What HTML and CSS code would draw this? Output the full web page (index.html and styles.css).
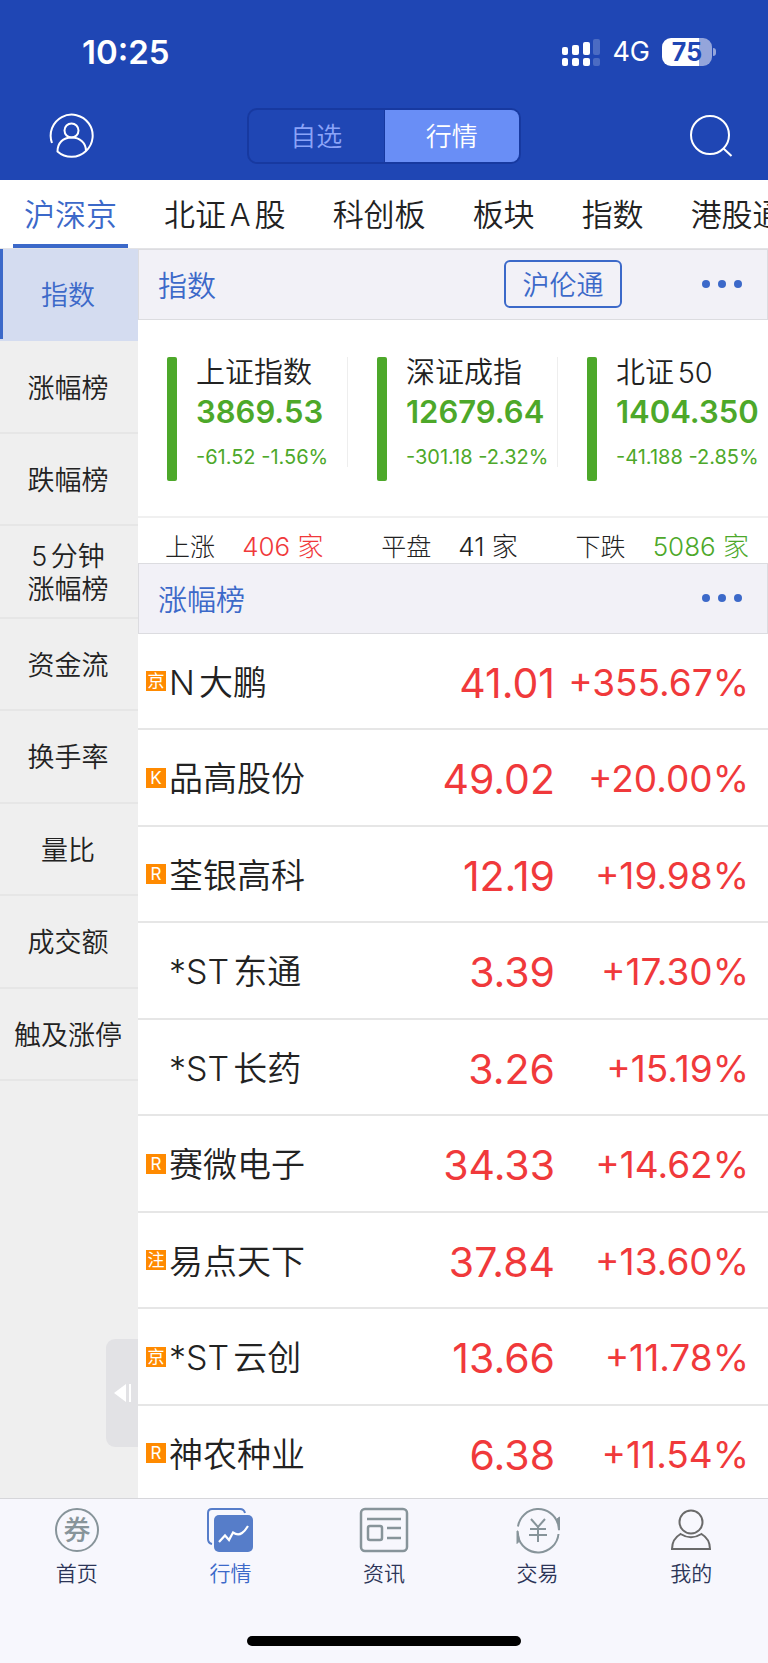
FILE: index.html
```html
<!DOCTYPE html>
<html lang="zh-CN">
<head>
    <meta charset="UTF-8">
    <meta name="viewport" content="width=device-width, initial-scale=1.0">
    <title>行情</title>
    <link rel="stylesheet" href="styles.css">
</head>
<body>
    <header class="top">
        <div class="status">
            <span class="time">10:25</span>
            <div class="status-right">
                <svg class="signal" width="38" height="28" viewBox="0 0 38 28" fill="#fff">
                    <rect x="0" y="9" width="6" height="8" rx="2"/>
                    <rect x="10" y="7" width="7" height="10" rx="2"/>
                    <rect x="21" y="4" width="7" height="13" rx="2"/>
                    <rect x="31" y="1" width="7" height="16" rx="2" opacity=".2"/>
                    <rect x="0" y="20" width="6" height="8" rx="2"/>
                    <rect x="10" y="20" width="7" height="8" rx="2"/>
                    <rect x="21" y="20" width="7" height="8" rx="2"/>
                    <rect x="31" y="20" width="7" height="8" rx="2" opacity=".2"/>
                </svg>
                <span class="network">4G</span>
                <span class="battery">75</span>
            </div>
        </div>
        <div class="toolbar">
            <button class="icon-btn" aria-label="账户">
                <svg width="46" height="46" viewBox="0 0 46 46" fill="none" stroke="#fff" stroke-width="2">
                    <path d="M3 30A21 21 0 1 1 37 38A21 21 0 0 1 8.500 38.500C8.500 30 14 24.500 22.500 24.500S37 30 37 38"/>
                    <circle cx="22.500" cy="17.500" r="7"/>
                </svg>
            </button>
            <div class="segment">
                <button>自选</button>
                <button class="active">行情</button>
            </div>
            <button class="icon-btn" aria-label="搜索">
                <svg width="46" height="46" viewBox="0 0 46 46" fill="none" stroke="#fff" stroke-width="2">
                    <circle cx="22" cy="22" r="19"/>
                    <path d="M35.500 35.500L43.500 43"/>
                </svg>
            </button>
        </div>
    </header>

    <nav class="tabs">
        <a href="#" class="active">沪深京</a>
        <a href="#">北证A股</a>
        <a href="#">科创板</a>
        <a href="#">板块</a>
        <a href="#">指数</a>
        <a href="#">港股通</a>
    </nav>

    <main>
        <aside class="side">
            <nav class="side-list">
                <a href="#" class="active">指数</a>
                <a href="#">涨幅榜</a>
                <a href="#">跌幅榜</a>
                <a href="#">5分钟<br>涨幅榜</a>
                <a href="#">资金流</a>
                <a href="#">换手率</a>
                <a href="#">量比</a>
                <a href="#">成交额</a>
                <a href="#">触及涨停</a>
            </nav>
            <button class="handle" aria-label="收起">
                <svg width="18" height="20" viewBox="0 0 18 20" fill="#fff">
                    <path d="M0 10L12 1V19Z"/>
                    <rect x="15" y="1" width="2" height="18"/>
                </svg>
            </button>
        </aside>

        <div class="content">
            <section>
                <div class="panel-head">
                    <h2>指数</h2>
                    <button class="link-btn">沪伦通</button>
                    <button class="more" aria-label="更多"><i></i><i></i><i></i></button>
                </div>
                <div class="cards">
                    <div class="card">
                        <div class="card-body">
                            <h3>上证指数</h3>
                            <p class="value">3869.53</p>
                            <p class="change">-61.52 -1.56%</p>
                        </div>
                    </div>
                    <div class="card">
                        <div class="card-body">
                            <h3>深证成指</h3>
                            <p class="value">12679.64</p>
                            <p class="change">-301.18 -2.32%</p>
                        </div>
                    </div>
                    <div class="card">
                        <div class="card-body">
                            <h3>北证50</h3>
                            <p class="value">1404.350</p>
                            <p class="change">-41.188 -2.85%</p>
                        </div>
                    </div>
                </div>
                <div class="counts">
                    <div>上涨<span class="up">406 家</span></div>
                    <div>平盘<span>41 家</span></div>
                    <div>下跌<span class="down">5086 家</span></div>
                </div>
            </section>

            <section>
                <div class="panel-head">
                    <h2>涨幅榜</h2>
                    <button class="more" aria-label="更多"><i></i><i></i><i></i></button>
                </div>
                <table class="stocks">
                    <tbody>
                        <tr><td class="tag"><b>京</b></td><td class="name">N大鹏</td><td class="price">41.01</td><td class="pct">+355.67%</td></tr>
                        <tr><td class="tag"><b>K</b></td><td class="name">品高股份</td><td class="price">49.02</td><td class="pct">+20.00%</td></tr>
                        <tr><td class="tag"><b>R</b></td><td class="name">荃银高科</td><td class="price">12.19</td><td class="pct">+19.98%</td></tr>
                        <tr><td class="tag"></td><td class="name">*ST东通</td><td class="price">3.39</td><td class="pct">+17.30%</td></tr>
                        <tr><td class="tag"></td><td class="name">*ST长药</td><td class="price">3.26</td><td class="pct">+15.19%</td></tr>
                        <tr><td class="tag"><b>R</b></td><td class="name">赛微电子</td><td class="price">34.33</td><td class="pct">+14.62%</td></tr>
                        <tr><td class="tag"><b>注</b></td><td class="name">易点天下</td><td class="price">37.84</td><td class="pct">+13.60%</td></tr>
                        <tr><td class="tag"><b>京</b></td><td class="name">*ST云创</td><td class="price">13.66</td><td class="pct">+11.78%</td></tr>
                        <tr><td class="tag"><b>R</b></td><td class="name">神农种业</td><td class="price">6.38</td><td class="pct">+11.54%</td></tr>
                    </tbody>
                </table>
            </section>
        </div>
    </main>

    <footer>
        <nav class="bottom">
            <a href="#">
                <svg width="48" height="48" viewBox="0 0 48 48" fill="none" stroke="#87949a" stroke-width="2">
                    <circle cx="24" cy="24" r="21"/>
                    <text class="coupon" x="24" y="34" text-anchor="middle">券</text>
                </svg>
                首页
            </a>
            <a href="#" class="active">
                <svg width="48" height="48" viewBox="0 0 48 48" fill="none" stroke="#567dc9" stroke-width="2">
                    <path d="M6 38Q2 37 2 33V7Q2 3 6 3H34Q38 3 39 7"/>
                    <rect x="8" y="9" width="39" height="37" rx="5" fill="#567dc9" stroke="none"/>
                    <path d="M13 36L19 29.500L23 34L27 26.500Q32 30 36 27Q39 25 42 20" stroke="#fff" stroke-width="2.200"/>
                </svg>
                行情
            </a>
            <a href="#">
                <svg width="50" height="48" viewBox="0 0 50 48" fill="none" stroke="#87949a" stroke-width="2.500">
                    <rect x="2" y="3" width="46" height="42" rx="4"/>
                    <path d="M8 13H42M28 22H42M28 32H42"/>
                    <rect x="9" y="20" width="14" height="14" rx="2"/>
                </svg>
                资讯
            </a>
            <a href="#">
                <svg width="48" height="48" viewBox="0 0 48 48" fill="none" stroke="#87949a" stroke-width="2">
                    <path d="M4 20.500A20.500 20.500 0 0 1 44 18M44.500 28A20.500 20.500 0 0 1 4 30"/>
                    <path d="M43 13L45.500 11V24H44.500Z M5.500 35L3 37.500V25H4Z" fill="#87949a" stroke-width="1"/>
                    <path d="M17 13L24 21L31 13M16 23H32M15 29H33M24 21V36"/>
                </svg>
                交易
            </a>
            <a href="#">
                <svg width="48" height="48" viewBox="0 0 48 48" fill="none" stroke="#6a6a6a" stroke-width="2">
                    <circle cx="24" cy="16" r="11.500"/>
                    <path d="M13.500 28Q5 33 5 43H43Q43 33 34.500 28Q24 34.500 13.500 28Z"/>
                </svg>
                我的
            </a>
        </nav>
        <div class="home-bar"></div>
    </footer>
</body>
</html>
```

FILE: styles.css
```css
* {
    box-sizing: border-box;
}
body {
    margin: 0;
    height: 100vh;
    display: flex;
    flex-direction: column;
    font-family: Inter, "Noto Sans CJK SC", sans-serif;
    font-weight: 350;
    color: #222;
    background-color: #fff;
    text-autospace: normal;
    overflow: hidden;
}
h2, h3, p {
    margin: 0;
    font-weight: inherit;
}
a {
    color: inherit;
    text-decoration: none;
}
button {
    font: inherit;
    color: inherit;
    background: none;
    border: none;
    padding: 0;
    cursor: pointer;
}
svg {
    display: block;
}

/* header */
.top {
    background-color: #1f46b4;
    color: #fff;
    height: 180px;
    flex-shrink: 0;
}
.status {
    display: flex;
    justify-content: space-between;
    align-items: center;
    height: 103px;
    padding: 0 56px 0 82px;
}
.time {
    font-size: 33px;
    font-weight: 600;
}
.status-right {
    display: flex;
    align-items: center;
}
.network {
    font-size: 27px;
    font-weight: 400;
    margin: 0 12px;
}
.battery {
    position: relative;
    width: 50px;
    height: 28px;
    line-height: 28px;
    border-radius: 9px;
    background: linear-gradient(to right, #fff 75%, #94a5db 75%);
    color: #1f46b4;
    font-size: 25px;
    font-weight: 700;
    text-align: center;
}
.battery::after {
    content: "";
    position: absolute;
    left: 51px;
    top: 10px;
    width: 3px;
    height: 8px;
    border-radius: 0 3px 3px 0;
    background-color: #94a5db;
}
.toolbar {
    display: grid;
    grid-template-columns: 1fr auto 1fr;
    align-items: center;
    height: 66px;
    padding: 0 34px 0 34px;
}
.icon-btn:first-child {
    justify-self: start;
    margin-left: 15px;
}
.icon-btn:last-child {
    justify-self: end;
}
.segment {
    display: flex;
    width: 274px;
    height: 56px;
    border: 2px solid #1739a0;
    border-radius: 10px;
    overflow: hidden;
}
.segment button {
    flex: 1;
    padding-bottom: 3px;
    font-size: 26px;
    color: #8ba3f8;
}
.segment .active {
    background-color: #698ef6;
    color: #fff;
    border-left: 1px solid #1739a0;
}

/* tabs */
.tabs {
    display: flex;
    gap: 25px;
    flex-shrink: 0;
    height: 69px;
    padding-left: 13px;
    border-bottom: 1px solid #e3e3e6;
    overflow: hidden;
}
.tabs a {
    flex-shrink: 0;
    height: 68px;
    padding: 0 11px;
    font-size: 31px;
    line-height: 70px;
}
.tabs .active {
    color: #3c69c9;
    box-shadow: inset 0 -4px #3c69c9;
}

main {
    flex: 1;
    min-height: 0;
    display: flex;
    overflow: hidden;
}

/* left menu */
.side {
    position: relative;
    width: 138px;
    flex-shrink: 0;
    background-color: #efefef;
}
.side-list {
    display: flex;
    flex-direction: column;
    height: 832px;
}
.side-list a {
    flex: 1;
    display: flex;
    align-items: center;
    justify-content: center;
    text-align: center;
    padding: 3px 2px 0 0;
    font-size: 27px;
    line-height: 33px;
    border-bottom: 2px solid #e6e6e6;
}
.side-list .active {
    color: #3c69c9;
    background-color: #d4dcf0;
    border-bottom-color: #d4dcf0;
    box-shadow: inset 3px 0 #3c69c9;
}
.handle {
    position: absolute;
    right: 0;
    bottom: 51px;
    width: 32px;
    height: 108px;
    padding-left: 8px;
    border-radius: 9px 0 0 9px;
    background-color: #e2e2e5;
}

/* content */
.content {
    flex: 1;
    min-width: 0;
}
.panel-head {
    display: flex;
    align-items: center;
    height: 71px;
    padding: 0 25px 1px 19px;
    background-color: #f2f1f7;
    border: 1px solid #dcdce0;
    color: #3c69c9;
}
.panel-head h2 {
    flex: 1;
    font-size: 29px;
}
.link-btn {
    width: 118px;
    height: 48px;
    margin-right: 80px;
    padding-bottom: 2px;
    border: 2px solid #3c69c9;
    border-radius: 6px;
    font-size: 27px;
}
.more {
    display: flex;
    gap: 8px;
}
.more i {
    width: 8px;
    height: 8px;
    border-radius: 50%;
    background-color: #3c69c9;
}
.cards {
    display: grid;
    grid-template-columns: repeat(3, minmax(0, 1fr));
    height: 198px;
    padding-top: 37px;
    border-bottom: 2px solid #f0f0f0;
}
.card {
    display: flex;
    padding-left: 29px;
}
.card::before {
    content: "";
    width: 10px;
    height: 124px;
    border-radius: 2px;
    background-color: #4da82a;
}
.card-body {
    flex: 1;
    min-width: 0;
    height: 110px;
    padding-left: 19px;
    border-right: 1px solid #eee;
    white-space: nowrap;
}
.card:last-child .card-body {
    border-right: none;
}
.card h3 {
    font-size: 29px;
    line-height: 32px;
}
.value {
    font-size: 31px;
    line-height: 46px;
    font-weight: 600;
    color: #4da82a;
}
.change {
    font-size: 20px;
    font-weight: 400;
    line-height: 44px;
    color: #4da82a;
}
.counts {
    display: flex;
    justify-content: space-between;
    height: 45px;
    padding: 0 19px 0 27px;
    font-size: 25px;
    line-height: 58px;
    font-weight: 300;
    overflow: hidden;
}
.counts span {
    margin-left: 24px;
    font-size: 26px;
}
.up {
    color: #f0393b;
}
.down {
    color: #4da82a;
}

/* stock table */
.stocks {
    width: 100%;
    border-spacing: 0;
    table-layout: fixed;
}
.stocks td {
    height: 96px;
    padding: 0;
    border-bottom: 2px solid #e6e6e6;
}
.stocks tr:nth-child(even) td {
    height: 97px;
}
.stocks .tag {
    width: 31px;
    padding-left: 8px;
}
.tag b {
    display: block;
    width: 20px;
    height: 20px;
    background-color: #ff8a00;
    color: #fff;
    font-size: 17px;
    line-height: 20px;
    font-weight: 400;
    text-align: center;
}
.stocks .name {
    padding-bottom: 2px;
    font-size: 34px;
}
.price, .pct {
    text-align: right;
    font-weight: 400;
    color: #f0393b;
}
.stocks .price {
    width: 150px;
    padding-top: 3px;
    font-size: 41px;
}
.stocks .pct {
    width: 213px;
    padding: 2px 19px 0 0;
    font-size: 37px;
}

/* bottom bar */
footer {
    flex-shrink: 0;
    height: 165px;
    display: flex;
    flex-direction: column;
    justify-content: space-between;
    align-items: center;
    padding-bottom: 17px;
    background-color: #f7f7fd;
    border-top: 1px solid #d6d6da;
}
.bottom {
    display: flex;
    width: 100%;
    padding-top: 7px;
}
.bottom a {
    flex: 1;
    display: flex;
    flex-direction: column;
    align-items: center;
    gap: 5px;
    font-size: 21px;
    line-height: 30px;
    color: #2c3558;
}
.bottom .active {
    color: #3c69c9;
}
.coupon {
    font-size: 27px;
    font-weight: 500;
    fill: #87949a;
    stroke: none;
}
.home-bar {
    width: 274px;
    height: 10px;
    border-radius: 5px;
    background-color: #000;
}
```
